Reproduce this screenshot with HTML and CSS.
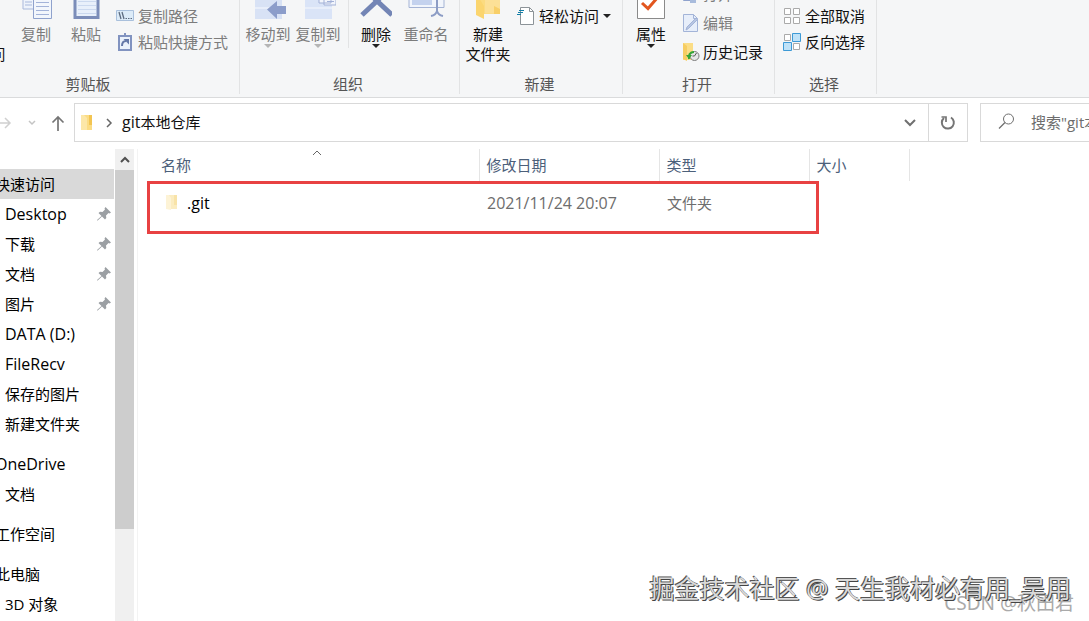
FILE: index.html
```html
<!DOCTYPE html>
<html lang="zh-CN">
<head>
    <meta charset="UTF-8">
    <meta name="viewport" content="width=device-width, initial-scale=1.0">
    <title>git本地仓库</title>
    <link rel="stylesheet" href="styles.css">
</head>
<body>

    <div class="window">

        <!-- RIBBON -->
        <div class="ribbon">
            <section class="group">
                <div class="group-body">
                    <button class="big pin-access">固定到<br>快速访问</button>
                    <button class="big disabled">
                        <svg width="32" height="20" viewBox="0 0 32 20"><path d="M3 -1h14v10H3z" fill="#eef3fb" stroke="#a9b9dc"/><path d="M5 2h7M5 5h7" stroke="#a9b9dc"/><path d="M13.500 -3h18v21.500h-18z" fill="#f2f6fc" stroke="#8fa2cd"/><path d="M16 2.500h13M16 6.500h13M16 10.500h13M16 14.500h13" stroke="#a3b3d9"/></svg>
                        复制
                    </button>
                    <button class="big disabled">
                        <svg width="32" height="20" viewBox="0 0 32 20"><path d="M5 -6h23v23.500H5z" fill="#e8f0fb" stroke="#7b8db9" stroke-width="3"/><path d="M8 1.500h18M8 5.500h18M8 9.500h18M8 13.500h18" stroke="#cbd9ef"/></svg>
                        粘贴
                    </button>
                    <div class="small-list clip-list clipboard-list">
                        <button class="small disabled">
                            <svg width="18" height="18" viewBox="0 0 18 18"><path d="M.5 3.500h17v10H.5z" fill="#dcebf8" stroke="#a9c0dc"/><path d="M3 5l2 7M6 5l2 7" stroke="#5e6c80" stroke-width="1.300"/><path d="M9.500 11.500h1.500M12 11.500h1.500M14.500 11.500h1.500" stroke="#5e6c80"/></svg>
                            复制路径
                        </button>
                        <button class="small disabled">
                            <svg width="18" height="20" viewBox="0 0 18 20"><path d="M3 4h12v14H3z" fill="#eaf1fb" stroke="#8193c0" stroke-width="2"/><path d="M6 3h6v2H6zM8 1h2v2H8z" fill="#8193c0"/><path d="M6 14c0-4 2-5 4-5" stroke="#6478a8" stroke-width="2" fill="none"/><path d="M7.500 7H13v5.500z" fill="#6478a8"/></svg>
                            粘贴快捷方式
                        </button>
                    </div>
                </div>
                <div class="group-name">剪贴板</div>
            </section>

            <section class="group">
                <div class="group-body organize">
                    <button class="big disabled">
                        <svg width="36" height="20" viewBox="0 0 36 20"><path d="M5 -2h27v21H5z" fill="#d8e2f5"/><path d="M5 8h27" stroke="#e8eefa" stroke-width="2"/><path d="M17 9.500L27 1v5h10v8H27v5z" fill="#8c9dca"/></svg>
                        移动到
                        <span class="arrow"></span>
                    </button>
                    <button class="big disabled">
                        <svg width="36" height="20" viewBox="0 0 36 20"><path d="M5 -2h27v21H5z" fill="#dae4f7"/><path d="M5 8h27" stroke="#e8eefa" stroke-width="2"/><path d="M19 -1h12v4H19zM24 -1h12v6H24z" fill="#f2f5fc" stroke="#a3b1d7"/><path d="M27 1.500h7" stroke="#a3b1d7"/></svg>
                        复制到
                        <span class="arrow"></span>
                    </button>
                    <span class="divider"></span>
                    <button class="big">
                        <svg width="32" height="20" viewBox="0 0 32 20"><path d="M2 15L17 1 32 15M12 -4l5 5 5-5" fill="none" stroke="#7385b5" stroke-width="5"/></svg>
                        删除
                        <span class="arrow"></span>
                    </button>
                    <button class="big disabled">
                        <svg width="38" height="20" viewBox="0 0 38 20"><path d="M2 -2v9.500h35V-2" fill="#f1f5fc" stroke="#a5b4d5"/><path d="M5 -1h20v6H5z" fill="#c4d2ee"/><path d="M30 -1v12q-1 4-6 5M30 11q1 4 6 5" fill="none" stroke="#8c9cc5" stroke-width="2"/></svg>
                        重命名
                    </button>
                </div>
                <div class="group-name">组织</div>
            </section>

            <section class="group">
                <div class="group-body create">
                    <button class="big">
                        <svg width="26" height="20" viewBox="0 0 26 20"><path d="M1 -2h24v16H9z" fill="#fbdb80"/><path d="M10 -2h15v15.500H10z" fill="#fce096"/><path d="M1 -2h3l5 8v13l-8-4z" fill="#fbd56f"/><path d="M19 6l6 3v5h-6z" fill="#f8cf68"/></svg>
                        新建<br>文件夹
                    </button>
                    <div class="small-list clip-list create-list">
                        <button class="small">
                            <svg width="18" height="20" viewBox="0 0 18 20"><path d="M3.500 1.500h9l4 4v13h-13z" fill="#fff" stroke="#8c9398"/><path d="M12.500 1.500v4h4" fill="none" stroke="#8c9398"/><path d="M2 4.500h5M1 6.500h5M0 8.500h4" stroke="#137fa8"/></svg>
                            轻松访问
                            <span class="arrow"></span>
                        </button>
                    </div>
                </div>
                <div class="group-name">新建</div>
            </section>

            <section class="group">
                <div class="group-body open">
                    <button class="big">
                        <svg width="28" height="20" viewBox="0 0 28 20"><path d="M.5 -2v20.500h27V-2" fill="#fff" stroke="#8a8a8a"/><path d="M5 3l6 5.500L21 -3" fill="none" stroke="#e2561f" stroke-width="3"/></svg>
                        属性
                        <span class="arrow"></span>
                    </button>
                    <div class="small-list open-list">
                        <button class="small disabled">
                            <svg width="18" height="20" viewBox="0 0 18 20"><path d="M1.500 4.500h10v12h-10z" fill="#dde8f7" stroke="#8fa2cd"/><path d="M8 12h6v7H8z" fill="#a8bbdc"/></svg>
                            打开
                        </button>
                        <button class="small disabled">
                            <svg width="18" height="20" viewBox="0 0 18 20"><path d="M1.500 1.500h10l4 4v13h-14z" fill="#e7eefa" stroke="#a3b4d8"/><path d="M11.500 1.500v4h4" fill="none" stroke="#a3b4d8"/><path d="M4 17l1-3 9-9 1.500 1.500-9 9z" fill="#b7c5e2" stroke="#a3b4d8"/></svg>
                            编辑
                        </button>
                        <button class="small">
                            <svg width="18" height="20" viewBox="0 0 18 20"><path d="M1 1h10v17H1z" fill="#fbdd86"/><path d="M1 1l4 3v15l-4-2z" fill="#f6cd62"/><circle cx="12.500" cy="14" r="4.500" fill="#e6e6e6" stroke="#7d7d7d"/><path d="M12.500 14l2-3M12.500 14h-2" stroke="#555"/><path d="M7 17c-1-4 1-7 5-7" fill="none" stroke="#36a636" stroke-width="2"/><path d="M4 13h6l-3 4z" fill="#36a636"/></svg>
                            历史记录
                        </button>
                    </div>
                </div>
                <div class="group-name">打开</div>
            </section>

            <section class="group">
                <div class="group-body select">
                    <div class="small-list clip-list">
                        <button class="small">
                            <svg width="18" height="18" viewBox="0 0 18 18"><path d="M1.500 1.500h6v6h-6zM10.500 1.500h6v6h-6zM1.500 10.500h6v6h-6zM10.500 10.500h6v6h-6z" fill="#fff" stroke="#aaa"/></svg>
                            全部取消
                        </button>
                        <button class="small">
                            <svg width="18" height="18" viewBox="0 0 18 18"><path d="M1.500 1.500h6v6h-6zM10.500 10.500h6v6h-6z" fill="#fff" stroke="#aaa"/><path d="M9.500 .5h8v8h-8zM.5 9.500h8v8h-8z" fill="#bfe2f8" stroke="#3d9ad6"/></svg>
                            反向选择
                        </button>
                    </div>
                </div>
                <div class="group-name">选择</div>
            </section>
        </div>

        <!-- ADDRESS BAR -->
        <div class="nav">
            <div class="nav-buttons">
                <button class="forward" aria-label="前进"><svg width="12" height="12" viewBox="0 0 12 12"><path d="M0 6h10M5 1l5 5-5 5" fill="none" stroke="#d0d0d0" stroke-width="1.500"/></svg></button>
                <button class="recent" aria-label="最近"><svg width="8" height="8" viewBox="0 0 8 8"><path d="M1 2l3 3 3-3" fill="none" stroke="#c4c4c4" stroke-width="1.500"/></svg></button>
                <button class="up" aria-label="上移"><svg width="14" height="16" viewBox="0 0 14 16"><path d="M7 16V2M1.500 7.500L7 2l5.500 5.500" fill="none" stroke="#757575" stroke-width="1.700"/></svg></button>
            </div>
            <div class="address">
                <svg class="folder" width="13" height="17" viewBox="0 0 13 17"><path d="M1 1h11v15H1z" fill="#fbdc84"/><path d="M1 1h3l3 3v12H1z" fill="#fce7a8"/><path d="M9 1h3v10H9z" fill="#f3c552"/></svg>
                <svg class="crumb" width="8" height="10" viewBox="0 0 8 10"><path d="M2 1l4 4-4 4" fill="none" stroke="#666" stroke-width="1.500"/></svg>
                <span class="path"><span class="latin">git</span>本地仓库</span>
                <button class="history" aria-label="历史"><svg width="12" height="8" viewBox="0 0 12 8"><path d="M1 1l5 5 5-5" fill="none" stroke="#707070" stroke-width="2"/></svg></button>
                <button class="refresh" aria-label="刷新"><svg width="16" height="16" viewBox="0 0 16 16"><path d="M11 2.500A6 6 0 1 1 4 3" fill="none" stroke="#757575" stroke-width="2"/><path d="M1.500 2h4.500v5" fill="none" stroke="#757575" stroke-width="1.700"/></svg></button>
            </div>
            <label class="search">
                <svg width="17" height="17" viewBox="0 0 17 17"><circle cx="10.500" cy="6" r="5" fill="none" stroke="#6e6e6e"/><path d="M7 9.500L1 15.500" stroke="#6e6e6e" stroke-width="1.200"/></svg>
                <input type="text" placeholder='搜索"git本地仓库"' aria-label="搜索">
            </label>
        </div>

        <div class="main">
            <!-- TREE -->
            <nav class="tree">
                <ul>
                    <li><a class="root selected" href="#">快速访问</a></li>
                    <li><a class="latin" href="#">Desktop<svg class="pin" width="14" height="14" viewBox="0 0 14 14"><path d="M8.500 0L14 5.500l-1.500 1-1-.5-2.500 2.500.3 2.500-1.300 1.500-3-3L.7 13.500 0 13.500l.3-.8L4.500 9l-3-3L3 4.700l2.500.3L8 2.500l-.5-1z" fill="#9b9fa3"/></svg></a></li>
                    <li><a href="#">下载<svg class="pin" width="14" height="14" viewBox="0 0 14 14"><path d="M8.500 0L14 5.500l-1.500 1-1-.5-2.500 2.500.3 2.500-1.300 1.500-3-3L.7 13.500 0 13.500l.3-.8L4.500 9l-3-3L3 4.700l2.500.3L8 2.500l-.5-1z" fill="#9b9fa3"/></svg></a></li>
                    <li><a href="#">文档<svg class="pin" width="14" height="14" viewBox="0 0 14 14"><path d="M8.500 0L14 5.500l-1.500 1-1-.5-2.500 2.500.3 2.500-1.300 1.500-3-3L.7 13.500 0 13.500l.3-.8L4.500 9l-3-3L3 4.700l2.500.3L8 2.500l-.5-1z" fill="#9b9fa3"/></svg></a></li>
                    <li><a href="#">图片<svg class="pin" width="14" height="14" viewBox="0 0 14 14"><path d="M8.500 0L14 5.500l-1.500 1-1-.5-2.500 2.500.3 2.500-1.300 1.500-3-3L.7 13.500 0 13.500l.3-.8L4.500 9l-3-3L3 4.700l2.500.3L8 2.500l-.5-1z" fill="#9b9fa3"/></svg></a></li>
                    <li><a class="latin" href="#">DATA (D:)</a></li>
                    <li><a class="latin" href="#">FileRecv</a></li>
                    <li><a href="#">保存的图片</a></li>
                    <li><a href="#">新建文件夹</a></li>
                </ul>
                <ul>
                    <li><a class="root latin" href="#">OneDrive</a></li>
                    <li><a href="#">文档</a></li>
                </ul>
                <ul>
                    <li><a class="root" href="#">工作空间</a></li>
                </ul>
                <ul>
                    <li><a class="root" href="#">此电脑</a></li>
                    <li><a href="#">3D 对象</a></li>
                </ul>
            </nav>

            <div class="scrollbar">
                <button aria-label="向上滚动"><svg width="10" height="8" viewBox="0 0 10 8"><path d="M1 6l4-4 4 4" fill="none" stroke="#505050" stroke-width="2"/></svg></button>
                <div class="thumb"></div>
            </div>

            <!-- FILES -->
            <div class="files">
                <table>
                    <thead>
                        <tr>
                            <th class="col-name">名称<svg class="sort" width="10" height="6" viewBox="0 0 10 6"><path d="M1 5l4-4 4 4" fill="none" stroke="#666"/></svg></th>
                            <th class="col-date">修改日期</th>
                            <th class="col-type">类型</th>
                            <th class="col-size">大小</th>
                        </tr>
                    </thead>
                    <tbody>
                        <tr>
                            <td class="name"><span class="latin"><svg width="13" height="17" viewBox="0 0 13 17"><path d="M1 0h11v14H1z" fill="#fbecc0"/><path d="M1 0h3l2 3v12l-5-1z" fill="#fdf3d6"/><path d="M9 0h3v10H9z" fill="#f8e3a8"/></svg>.git</span></td>
                            <td class="latin">2021/11/24 20:07</td>
                            <td>文件夹</td>
                            <td></td>
                        </tr>
                    </tbody>
                </table>
                <div class="mark"></div>
            </div>
        </div>
    </div>

    <div class="watermark csdn">CSDN @秋田君</div>
    <div class="watermark juejin">掘金技术社区 @ 天生我材必有用_吴用</div>

</body>
</html>
```
FILE: styles.css
```css
* {
    box-sizing: border-box;
}

body {
    margin: 0;
    height: 100vh;
    position: relative;
    overflow: hidden;
    background-color: #fff;
    color: #111;
    font-family: "Open Sans", "Noto Sans CJK SC", sans-serif;
    font-size: 15px;
    line-height: 20px;
}

button,
input {
    margin: 0;
    padding: 0;
    border: 0;
    background: none;
    color: inherit;
    font: inherit;
}

svg {
    display: block;
    flex: none;
}

.latin {
    font-size: 16px;
}

/* the window hangs over the left edge of the screen */
.window {
    margin-left: -60px;
    height: 100%;
    display: flex;
    flex-direction: column;
}

/* --- RIBBON --- */
.ribbon {
    display: grid;
    grid-template-columns: 300px 220px 163px 152px 102px;
    height: 98px;
    flex: none;
    overflow: hidden;
    background-color: #f5f6f7;
    border-bottom: 1px solid #dadbdc;
}

.group {
    display: flex;
    flex-direction: column;
    border-right: 1px solid #e2e3e4;
    margin-bottom: 3px;
    min-width: 0;
}

.group-body {
    display: flex;
    height: 74px;
}

.group-name {
    padding-right: 3px;
    text-align: center;
    color: #555;
}

.big {
    width: 50px;
    display: flex;
    flex-direction: column;
    align-items: center;
    align-self: flex-start;
    white-space: nowrap;
}

.big svg {
    margin-bottom: 4px;
}

.pin-access {
    width: 71px;
    padding-top: 24px;
}

.disabled {
    color: #7c7c7c;
}

.arrow {
    border: 4px solid transparent;
    border-top-color: #222;
    border-bottom: 0;
}

.disabled .arrow {
    border-top-color: #b5b5b5;
}

.small-list {
    display: flex;
    flex-direction: column;
    padding-left: 4px;
}

.small {
    display: flex;
    align-items: center;
    gap: 4px;
    height: 26px;
    white-space: nowrap;
}

.clip-list {
    padding-top: 3px;
}

.clipboard-list {
    padding-left: 5px;
}

.create-list {
    padding-left: 1px;
}

.organize {
    padding-left: 3px;
}

.divider {
    width: 1px;
    height: 48px;
    margin: 0 2px 0 5px;
    background-color: #e2e3e4;
}

.create .big {
    width: 56px;
}

.open {
    padding-left: 3px;
}

.open-list {
    justify-content: flex-end;
    padding-left: 6px;
    padding-bottom: 8px;
}

.open-list .small {
    flex: none;
    height: 29px;
    gap: 3px;
}

.select {
    padding-left: 4px;
}

/* --- ADDRESS BAR --- */
.nav {
    display: flex;
    flex: none;
    padding: 5px 0 7px 60px;
}

.nav-buttons {
    width: 74px;
    display: flex;
    align-items: center;
    justify-content: space-between;
    padding-right: 9px;
}

.address {
    flex: 1;
    display: flex;
    align-items: center;
    height: 39px;
    border: 1px solid #d9d9d9;
    padding-left: 5px;
}

.crumb {
    margin-left: 12px;
}

.path {
    flex: 1;
    margin-left: 9px;
    padding-bottom: 2px;
}

.history,
.refresh {
    height: 100%;
    width: 37px;
    display: flex;
    align-items: center;
    justify-content: center;
}

.refresh {
    width: 39px;
    border-left: 1px solid #d9d9d9;
}

.search {
    width: 109px;
    margin-left: 12px;
    display: flex;
    align-items: center;
    gap: 16px;
    padding: 0 0 2px 17px;
    border: 1px solid #d9d9d9;
    border-right: 0;
}

.search input {
    flex: 1;
    min-width: 0;
    outline: 0;
}

.search input::placeholder {
    color: #6d6d6d;
    opacity: 1;
}

/* --- TREE --- */
.main {
    flex: 1;
    display: flex;
    min-height: 0;
}

.tree {
    width: 174px;
    padding-top: 20px;
    overflow: hidden;
}

.tree ul {
    list-style: none;
    margin: 0 0 10px;
    padding: 0;
}

.tree a {
    display: flex;
    align-items: center;
    justify-content: space-between;
    height: 30px;
    padding: 0 3px 0 65px;
    color: #000;
    text-decoration: none;
}

.tree .root {
    padding-left: 55px;
}

.tree .selected {
    background-color: #d9d9d9;
}

.scrollbar {
    width: 19px;
    margin-left: 1px;
    background-color: #f0f0f0;
}

.scrollbar button {
    width: 100%;
    height: 21px;
    display: flex;
    align-items: center;
    justify-content: center;
}

.thumb {
    height: 76%;
    background-color: #cdcdcd;
}

/* --- FILES --- */
.files {
    flex: 1;
    position: relative;
    margin-left: 3px;
    border-left: 1px solid #f3f3f3;
}

table {
    border-collapse: collapse;
    table-layout: fixed;
    width: 771px;
}

th {
    position: relative;
    height: 32px;
    padding: 0 0 0 7px;
    border-right: 1px solid #e5e5e5;
    color: #4c607a;
    font-weight: 400;
    text-align: left;
}

.col-name {
    width: 341px;
    padding-left: 23px;
}

.col-date {
    width: 180px;
}

.col-type {
    width: 150px;
}

.col-size {
    width: 100px;
}

.sort {
    position: absolute;
    top: 1px;
    left: 51%;
}

td {
    height: 44px;
    padding: 0 0 0 8px;
    color: #6d6d6d;
}

.name {
    padding-left: 27px;
    color: #000;
}

.name span {
    display: flex;
    align-items: center;
    gap: 9px;
}

/* red frame around the .git row */
.mark {
    position: absolute;
    top: 32px;
    left: 9px;
    width: 672px;
    height: 53px;
    border: 3px solid #e84142;
}

/* --- WATERMARKS --- */
.watermark {
    position: absolute;
    white-space: nowrap;
    font-family: "Noto Sans", "Noto Sans CJK SC", sans-serif;
}

.juejin {
    right: 18px;
    bottom: 17px;
    font-size: 25px;
    line-height: 32px;
    color: #d9d9d9;
    text-shadow: -1px -1px 0 #555, 1px 1px 0 #444;
}

.csdn {
    right: 15px;
    bottom: 5px;
    font-size: 19px;
    line-height: 26px;
    color: #aaa;
}
```
